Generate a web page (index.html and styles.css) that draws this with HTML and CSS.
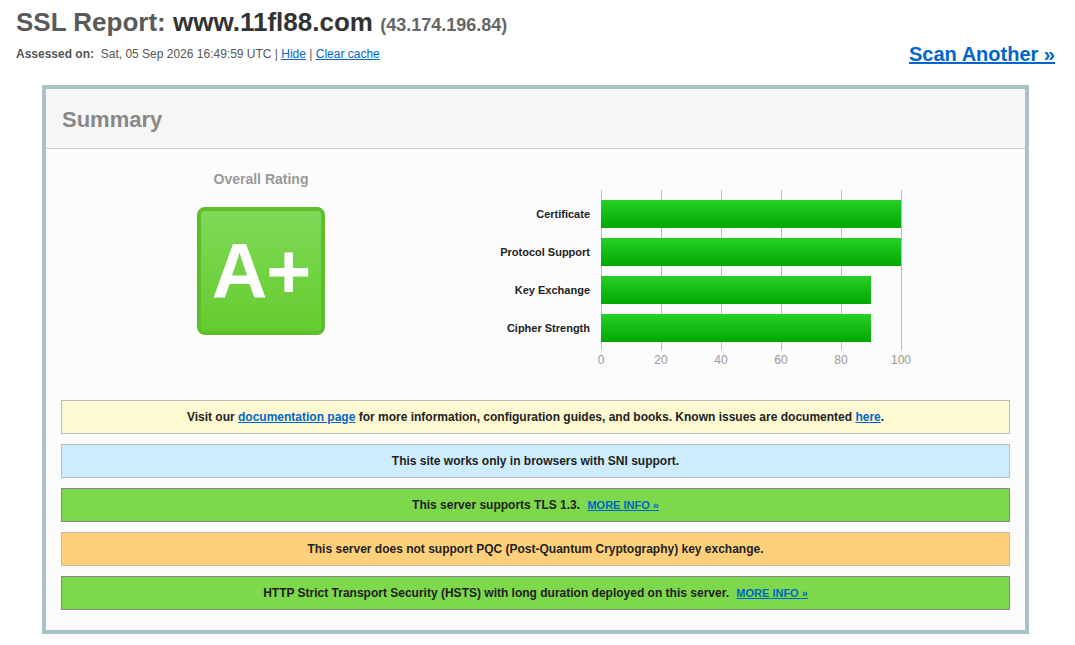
FILE: index.html
```html
<!DOCTYPE html>
<html>
<head>
<meta charset="utf-8">
<link rel="stylesheet" href="styles.css">
</head>
<body>
<div class="page">
  <div class="top">
    <div class="titles">
      <h1 class="title"><span class="t-label">SSL Report:</span> <span class="t-host">www.11fl88.com</span> <span class="t-ip">(43.174.196.84)</span></h1>
      <div class="assessed"><b>Assessed on:</b>&nbsp; Sat, 05 Sep 2026 16:49:59 UTC | <a href="#">Hide</a> | <a href="#">Clear cache</a></div>
    </div>
    <a class="scan" href="#">Scan Another »</a>
  </div>

  <div class="box">
    <div class="box-head"><h2>Summary</h2></div>
    <div class="box-body">
      <div class="summary">
        <div class="rating">
          <div class="rating-label">Overall Rating</div>
          <div class="grade">A+</div>
        </div>
        <div class="chart">
          <div class="labels">
            <div class="lab">Certificate</div>
            <div class="lab">Protocol Support</div>
            <div class="lab">Key Exchange</div>
            <div class="lab">Cipher Strength</div>
          </div>
          <div class="plot-wrap">
            <div class="plot">
              <div class="bar" style="width:300px"></div>
              <div class="bar" style="width:300px"></div>
              <div class="bar" style="width:270px"></div>
              <div class="bar" style="width:270px"></div>
            </div>
            <div class="axis">
              <span>0</span><span>20</span><span>40</span><span>60</span><span>80</span><span>100</span>
            </div>
          </div>
        </div>
      </div>

      <div class="notice n-yellow">Visit our <a href="#">documentation page</a> for more information, configuration guides, and books. Known issues are documented <a href="#">here</a>.</div>
      <div class="notice n-blue">This site works only in browsers with SNI support.</div>
      <div class="notice n-green">This server supports TLS 1.3. <a class="more" href="#">MORE INFO »</a></div>
      <div class="notice n-orange">This server does not support PQC (Post-Quantum Cryptography) key exchange.</div>
      <div class="notice n-green">HTTP Strict Transport Security (HSTS) with long duration deployed on this server. <a class="more" href="#">MORE INFO »</a></div>
    </div>
  </div>
</div>
</body>
</html>
```
FILE: styles.css
```css
html, body {
  margin: 0;
  padding: 0;
  background: #ffffff;
  font-family: "Liberation Sans", Arial, sans-serif;
}

.page {
  padding: 7px 20px 0 16px;
}

.top {
  display: flex;
  justify-content: space-between;
  align-items: flex-start;
}

.title {
  margin: 0;
  font-size: 26px;
  line-height: 30px;
  font-weight: bold;
}

.t-label { color: #5a5a5a; }
.t-host { color: #333333; }
.t-ip { color: #666666; font-size: 18px; }

.assessed {
  margin-top: 7px;
  font-size: 12px;
  line-height: 15px;
  color: #555555;
}

.assessed b { color: #555555; }

.assessed a {
  color: #0066cc;
}

.scan {
  margin-top: 35px;
  font-size: 20px;
  line-height: 24px;
  font-weight: bold;
  color: #0066cc;
  text-decoration: underline;
}

.box {
  margin: 19px 0 0 26px;
  width: 979px;
  border: 4px solid #a8c3c5;
  background: #fcfcfc;
}

.box-head {
  background: #f6f6f6;
  border-bottom: 1px solid #cccccc;
  height: 60px;
  box-sizing: border-box;
  display: flex;
  align-items: center;
  padding: 2px 0 0 16px;
}

.box-head h2 {
  margin: 0;
  font-size: 22px;
  font-weight: bold;
  color: #888888;
}

.box-body {
  padding: 0 15px 20px 15px;
}

.summary {
  display: flex;
  height: 251px;
}

.rating {
  width: 400px;
  display: flex;
  flex-direction: column;
  align-items: center;
  padding-top: 22px;
}

.rating-label {
  font-size: 14px;
  line-height: 16px;
  font-weight: bold;
  color: #999999;
}

.grade {
  margin-top: 20px;
  width: 120px;
  height: 120px;
  border: 4px solid #5dbf2c;
  border-radius: 8px;
  background: linear-gradient(to bottom, #80d957, #64cc2f);
  color: #ffffff;
  font-size: 77px;
  font-weight: bold;
  line-height: 120px;
  text-align: center;
  letter-spacing: -1px;
}

.chart {
  display: flex;
  padding-top: 41px;
}

.labels {
  width: 129px;
  padding-top: 10px;
  display: flex;
  flex-direction: column;
  gap: 10px;
  margin-right: 11px;
}

.lab {
  height: 28px;
  line-height: 28px;
  text-align: right;
  font-size: 11px;
  font-weight: bold;
  color: #222222;
}

.plot {
  width: 301px;
  height: 160px;
  box-sizing: border-box;
  padding-top: 10px;
  display: flex;
  flex-direction: column;
  gap: 10px;
  background: repeating-linear-gradient(to right, #bbbbbb 0, #bbbbbb 1px, transparent 1px, transparent 60px);
}

.bar {
  height: 28px;
  background: linear-gradient(to bottom, #26d126, #00a800);
}

.axis {
  display: grid;
  grid-template-columns: repeat(6, 60px);
  margin-left: -30px;
  margin-top: 3px;
  font-size: 12px;
  line-height: 14px;
  color: #999999;
}

.axis span {
  text-align: center;
}

.notice {
  height: 32px;
  line-height: 32px;
  margin-bottom: 10px;
  text-align: center;
  font-size: 12px;
  font-weight: bold;
  color: #222222;
  border: 1px solid #bbbbbb;
}

.notice:last-child {
  margin-bottom: 0;
}

.notice a {
  color: #0066cc;
}

.notice .more {
  margin-left: 4px;
  font-size: 11px;
}

.n-yellow { background: #fff9d1; }
.n-blue { background: #cdedfe; }
.n-green { background: #7dd84b; border-color: #888888; }
.n-orange { background: #ffd07b; }
```
